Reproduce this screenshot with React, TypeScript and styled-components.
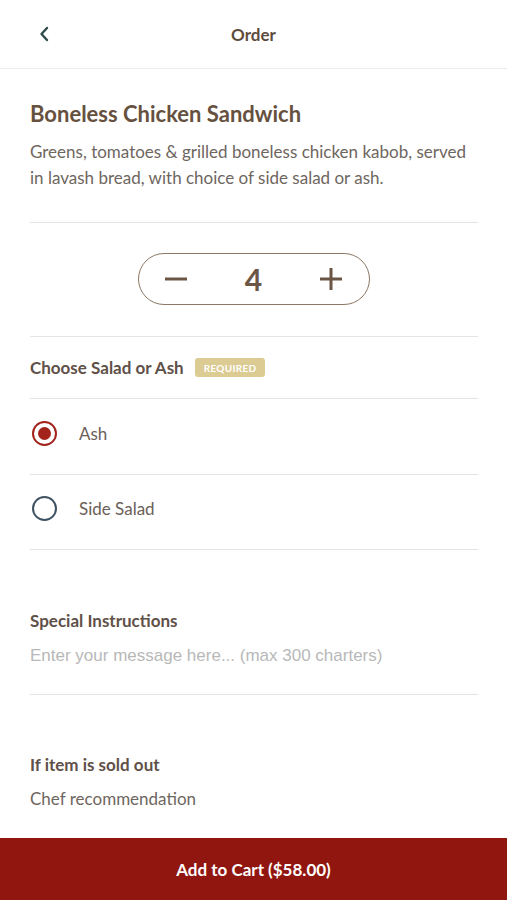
import React, { useState } from "react";
import styled, { createGlobalStyle } from "styled-components";

const Global = createGlobalStyle`
  html, body { margin: 0; padding: 0; background: #fff; }
  body { font-family: Lato, "Open Sans", sans-serif; }
  * { box-sizing: border-box; }
`;

const Page = styled.div`
  min-height: 100vh;
  display: flex;
  flex-direction: column;
  background: #fff;
`;

const Header = styled.header`
  height: 69px;
  border-bottom: 1px solid #ececec;
  display: grid;
  grid-template-columns: 60px 1fr 60px;
  align-items: center;
`;

const BackButton = styled.button`
  border: none;
  background: none;
  padding: 0 0 0 38px;
  height: 100%;
  display: flex;
  align-items: center;
  color: #2e4a4a;
  cursor: pointer;
`;

const HeaderTitle = styled.h1`
  margin: 0;
  text-align: center;
  font-size: 17px;
  font-weight: 700;
  color: #5e4b3c;
`;

const Content = styled.main`
  flex: 1;
  padding: 0 29px 20px 30px;
`;

const Section = styled.section<{ $pt?: number; $pb?: number; $border?: boolean }>`
  padding-top: ${(p) => p.$pt ?? 0}px;
  padding-bottom: ${(p) => p.$pb ?? 0}px;
  border-bottom: ${(p) => (p.$border ? "1px solid #e4e4e4" : "none")};
`;

const Title = styled.h2`
  margin: 0;
  font-size: 22px;
  line-height: 26px;
  font-weight: 700;
  color: #66503e;
`;

const Description = styled.p`
  margin: 12px 0 0;
  font-size: 17px;
  line-height: 26px;
  color: #6e6660;
`;

const StepperWrap = styled.div`
  display: flex;
  justify-content: center;
`;

const Stepper = styled.div`
  width: 232px;
  height: 52px;
  border: 1.5px solid #8b7866;
  border-radius: 26px;
  display: flex;
  align-items: center;
  justify-content: space-between;
  padding: 0 27px 0 26px;
`;

const StepButton = styled.button`
  border: none;
  background: none;
  padding: 0;
  display: flex;
  align-items: center;
  justify-content: center;
  color: #6b5646;
  cursor: pointer;
`;

const Count = styled.span`
  font-size: 30px;
  font-weight: 700;
  color: #6b5646;
`;

const GroupHeader = styled.div`
  height: 62px;
  display: flex;
  align-items: center;
  gap: 11px;
  border-bottom: 1px solid #e4e4e4;
`;

const GroupLabel = styled.span`
  font-size: 17px;
  font-weight: 700;
  color: #5f5048;
`;

const Badge = styled.span`
  background: #dccb92;
  color: #fff;
  font-size: 10px;
  font-weight: 700;
  letter-spacing: 0.3px;
  border-radius: 3px;
  padding: 0 9px;
  height: 19px;
  display: inline-flex;
  align-items: center;
`;

const OptionRow = styled.label<{ $h: number }>`
  height: ${(p) => p.$h}px;
  display: flex;
  align-items: center;
  gap: 22px;
  padding-bottom: 7px;
  border-bottom: 1px solid #e4e4e4;
  cursor: pointer;
`;

const Radio = styled.span<{ $checked: boolean }>`
  width: 25px;
  height: 25px;
  margin-left: 2px;
  border-radius: 50%;
  border: 2px solid ${(p) => (p.$checked ? "#a3221c" : "#3f5262")};
  display: flex;
  align-items: center;
  justify-content: center;
  &::after {
    content: "";
    width: 13px;
    height: 13px;
    border-radius: 50%;
    background: #a3221c;
    display: ${(p) => (p.$checked ? "block" : "none")};
  }
`;

const OptionText = styled.span`
  font-size: 17px;
  color: #6b6058;
`;

const FieldLabel = styled.h3`
  margin: 0;
  font-size: 17px;
  line-height: 22px;
  font-weight: 700;
  color: #5f5048;
`;

const Input = styled.input`
  display: block;
  width: 100%;
  margin-top: 13px;
  border: none;
  outline: none;
  padding: 0;
  font-family: "Liberation Sans", Arial, sans-serif;
  font-size: 17px;
  line-height: 22px;
  height: 22px;
  color: #555;
  &::placeholder { color: #b8b8b8; }
`;

const Value = styled.p`
  margin: 12px 0 0;
  font-size: 17px;
  line-height: 22px;
  color: #6e6660;
`;

const CartButton = styled.button`
  height: 62px;
  width: 100%;
  border: none;
  background: #921610;
  color: #fff;
  font-family: Lato, sans-serif;
  font-size: 17px;
  font-weight: 700;
  cursor: pointer;
`;

export default function App() {
  const [qty, setQty] = useState(4);
  const [choice, setChoice] = useState("Ash");
  const options = [
    { label: "Ash", h: 76 },
    { label: "Side Salad", h: 75 },
  ];
  return (
    <Page>
      <Global />
      <Header>
        <BackButton aria-label="Back">
          <svg width="12" height="18" viewBox="0 0 12 18" fill="none">
            <path d="M9 3L3.5 9L9 15" stroke="currentColor" strokeWidth="2.4" strokeLinecap="round" strokeLinejoin="round" />
          </svg>
        </BackButton>
        <HeaderTitle>Order</HeaderTitle>
        <span />
      </Header>
      <Content>
        <Section $pt={32} $pb={31} $border>
          <Title>Boneless Chicken Sandwich</Title>
          <Description>
            Greens, tomatoes &amp; grilled boneless chicken kabob, served in lavash bread, with choice of side salad or ash.
          </Description>
        </Section>
        <Section $pt={30} $pb={31} $border>
          <StepperWrap>
            <Stepper>
              <StepButton aria-label="Decrease" onClick={() => setQty(Math.max(1, qty - 1))}>
                <svg width="22" height="22" viewBox="0 0 22 22">
                  <path d="M0 11H22" stroke="currentColor" strokeWidth="3" />
                </svg>
              </StepButton>
              <Count>{qty}</Count>
              <StepButton aria-label="Increase" onClick={() => setQty(qty + 1)}>
                <svg width="22" height="22" viewBox="0 0 22 22">
                  <path d="M0 11H22M11 0V22" stroke="currentColor" strokeWidth="3" />
                </svg>
              </StepButton>
            </Stepper>
          </StepperWrap>
        </Section>
        <GroupHeader>
          <GroupLabel>Choose Salad or Ash</GroupLabel>
          <Badge>REQUIRED</Badge>
        </GroupHeader>
        {options.map((o) => (
          <OptionRow key={o.label} $h={o.h} onClick={() => setChoice(o.label)}>
            <Radio $checked={choice === o.label} />
            <OptionText>{o.label}</OptionText>
          </OptionRow>
        ))}
        <Section $pt={60} $pb={27} $border>
          <FieldLabel>Special Instructions</FieldLabel>
          <Input placeholder="Enter your message here... (max 300 charters)" />
        </Section>
        <Section $pt={59}>
          <FieldLabel>If item is sold out</FieldLabel>
          <Value>Chef recommendation</Value>
        </Section>
      </Content>
      <CartButton>Add to Cart ($58.00)</CartButton>
    </Page>
  );
}
